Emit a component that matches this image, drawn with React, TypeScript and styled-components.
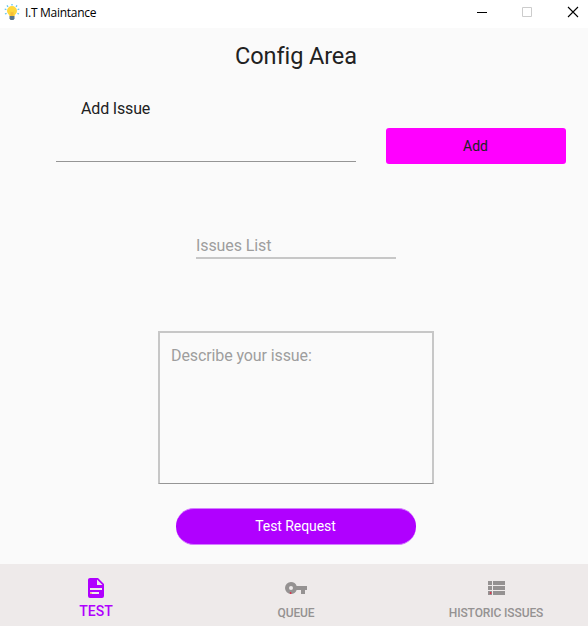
import React from "react";
import styled, { createGlobalStyle } from "styled-components";

const GlobalStyle = createGlobalStyle`
  *, *::before, *::after { box-sizing: border-box; }
  body { margin: 0; background: #fafafa; }
  button, input, textarea { font-family: inherit; }
`;

const Window = styled.div`
  width: 588px;
  height: 626px;
  display: flex;
  flex-direction: column;
  overflow: hidden;
  background: #fafafa;
  color: #212121;
  font-family: Roboto, "Liberation Sans", sans-serif;
  font-variant-ligatures: none;
`;

const TitleBar = styled.header`
  display: flex;
  align-items: center;
  height: 28px;
  flex: none;
  padding: 0 9px 4px 4px;
  background: #fff;
`;

const AppName = styled.span`
  flex: 1;
  margin-left: 5px;
  color: #000;
  font: 12px/16px "Open Sans", "Noto Sans", sans-serif;
  letter-spacing: -0.28px;
  padding-top: 2px;
`;

const WindowControls = styled.div`
  display: flex;
  gap: 33px;

  svg { display: block; }
  svg:last-child { margin-left: 1px; }
`;

const Content = styled.main`
  flex: 1;
  display: flex;
  flex-direction: column;
  align-items: center;
  padding-left: 4px;
`;

const Heading = styled.h1`
  margin: 14px 0 0;
  font-size: 23.5px;
  line-height: 28px;
  font-weight: 400;
  letter-spacing: -0.1px;
`;

const AddRow = styled.section`
  width: 100%;
  display: flex;
  align-items: flex-end;
  gap: 30px;
  margin-top: 28px;
  padding: 0 22px 0 52px;
`;

const AddField = styled.label`
  display: flex;
  flex-direction: column;
  width: 300px;
  height: 63px;
  margin: 1px 0 2px;
  padding-left: 25px;
  border-bottom: 1px solid #959595;
  font-size: 16px;
  line-height: 20px;
  letter-spacing: -0.16px;
`;

const FieldInput = styled.input`
  width: 100%;
  flex: 1;
  min-height: 0;
  border: 0;
  padding: 0;
  outline: 0;
  background: transparent;
  font-size: 16px;
`;

const Button = styled.button<{ $variant: "flat" | "pill" }>`
  display: flex;
  align-items: center;
  justify-content: center;
  border: 0;
  padding: 0;
  height: 36px;
  width: ${(p) => (p.$variant === "pill" ? 240 : 180)}px;
  border-radius: ${(p) => (p.$variant === "pill" ? 18 : 3)}px;
  background: ${(p) => (p.$variant === "pill" ? "#b000ff" : "#ff00ff")};
  color: ${(p) => (p.$variant === "pill" ? "#fff" : "#212121")};
  font-size: 14px;
  line-height: 16px;
`;

const AddButton = styled(Button)`
  padding-right: 1px;
`;

const IssuePicker = styled.div`
  width: 200px;
  height: 23px;
  margin-top: 72px;
  border-bottom: 2px solid #c7c7c7;
  color: #9e9e9e;
  font-size: 16px;
  line-height: 20px;
  letter-spacing: -0.1px;
`;

const Description = styled.textarea`
  display: block;
  width: 276px;
  height: 153px;
  margin-top: 72px;
  padding: 13px 11px;
  border: 2px solid #c7c7c7;
  border-bottom: 1px solid #959595;
  outline: 0;
  resize: none;
  background: transparent;
  font-size: 16px;
  line-height: 20px;
  letter-spacing: -0.1px;

  &::placeholder { color: #9e9e9e; opacity: 1; }
`;

const RequestButton = styled(Button)`
  height: 37px;
  margin-top: 24px;
  padding: 0 1px 2px 0;
  border-top: 1px solid #d47dff;
  border-bottom: 1px solid #d47dff;
  letter-spacing: -0.06px;
`;

const Navigation = styled.nav`
  flex: none;
  height: 62px;
  display: grid;
  grid-template-columns: 192px 208px 192px;
  background: #eeeaea;
`;

const NavItem = styled.a<{ $active?: boolean }>`
  display: flex;
  flex-direction: column;
  align-items: center;
  padding-top: 12px;
  color: ${(p) => (p.$active ? "#b000ff" : "#959292")};
  font-size: ${(p) => (p.$active ? 14 : 12)}px;
  font-weight: 500;
  letter-spacing: ${(p) => (p.$active ? 0 : -0.12)}px;
  line-height: 16px;
  white-space: nowrap;

  svg { display: block; margin-bottom: ${(p) => (p.$active ? 3 : 5)}px; }
`;

const BulbIcon = () => (
  <svg width="16" height="17" viewBox="0 0 16 17">
    <g stroke="#65c5ee" strokeWidth="1.3">
      <path d="M8 0v1.5M3 1.3l1 1.5M13 1.3l-1 1.5M.7 5l1.7.6M15.3 5l-1.7.6M1 10l1.6-.7M15 10l-1.6-.7" />
    </g>
    <path d="M8 2a5 5 0 0 0-5 5c0 2.5 2 3.2 2.5 5h5C11 10.200 13 9.500 13 7a5 5 0 0 0-5-5z" fill="#ffd83d" />
    <path d="M6.500 7.500L8 8.500l1.500-1V12h-3z" fill="#f6bd37" />
    <path d="M5.500 12h5v2.500L9.500 16h-3l-1-1.500z" fill="#58748a" />
  </svg>
);

const NAV_ITEMS = [
  {
    label: "TEST",
    active: true,
    dot: [6.9, 17.2],
    dotColor: "#f09a70",
    path: "M13 9h5.500L13 3.500V9M6 2h8l6 6v12a2 2 0 0 1-2 2H6a2 2 0 0 1-2-2V4c0-1.110.89-2 2-2m9 16v-2H6v2h9m3-4v-2H6v2h12Z",
  },
  {
    label: "QUEUE",
    active: false,
    dot: [6.6, 17],
    dotColor: "#e02c48",
    path: "M7 14a2 2 0 0 1-2-2 2 2 0 0 1 2-2 2 2 0 0 1 2 2 2 2 0 0 1-2 2m5.650-4A5.990 5.990 0 0 0 7 6a6 6 0 0 0-6 6 6 6 0 0 0 6 6 5.990 5.990 0 0 0 5.650-4H17v4h4v-4h2v-4H12.650Z",
  },
  {
    label: "HISTORIC ISSUES",
    active: false,
    dot: [6.6, 17],
    dotColor: "#e02c48",
    path: "M9 5v4h12V5M9 19h12v-4H9m0-1h12v-4H9M4 9h4V5H4m0 14h4v-4H4m0-1h4v-4H4v4Z",
  },
];

export default function App() {
  return (
    <Window>
      <GlobalStyle />
      <TitleBar>
        <BulbIcon />
        <AppName>I.T Maintance</AppName>
        <WindowControls>
          <svg width="12" height="12" viewBox="0 0 12 12"><path d="M1 6.500h10" stroke="#000" /></svg>
          <svg width="12" height="12" viewBox="0 0 12 12"><path d="M1.500 1.500h9v9h-9z" fill="none" stroke="#ccc" /></svg>
          <svg width="12" height="12" viewBox="0 0 12 12"><path d="M1 1l10 10M11 1L1 11" stroke="#000" strokeWidth="1.100" /></svg>
        </WindowControls>
      </TitleBar>
      <Content>
        <Heading>Config Area</Heading>
        <AddRow>
          <AddField>
            Add Issue
            <FieldInput />
          </AddField>
          <AddButton $variant="flat">Add</AddButton>
        </AddRow>
        <IssuePicker>Issues List</IssuePicker>
        <Description placeholder="Describe your issue:" />
        <RequestButton $variant="pill">Test Request</RequestButton>
      </Content>
      <Navigation>
        {NAV_ITEMS.map((item) => (
          <NavItem key={item.label} $active={item.active}>
            <svg width="24" height="24" viewBox="0 0 24 24">
              <path d={item.path} fill="currentColor" />
              <circle cx={item.dot[0]} cy={item.dot[1]} r="0.9" fill={item.dotColor} />
            </svg>
            {item.label}
          </NavItem>
        ))}
      </Navigation>
    </Window>
  );
}
